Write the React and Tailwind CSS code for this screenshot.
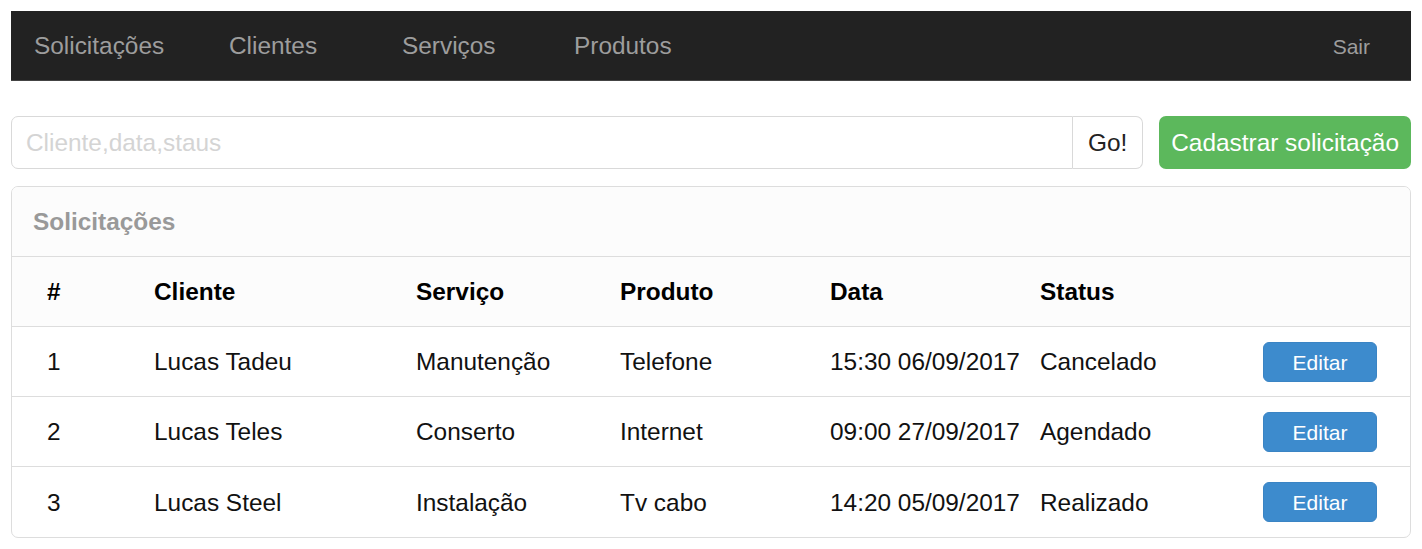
import React from 'react';

const rows = [
  { id: 1, cliente: 'Lucas Tadeu', servico: 'Manutenção', produto: 'Telefone', data: '15:30 06/09/2017', status: 'Cancelado' },
  { id: 2, cliente: 'Lucas Teles', servico: 'Conserto', produto: 'Internet', data: '09:00 27/09/2017', status: 'Agendado' },
  { id: 3, cliente: 'Lucas Steel', servico: 'Instalação', produto: 'Tv cabo', data: '14:20 05/09/2017', status: 'Realizado' },
];

const cols = 'grid grid-cols-[107px_262px_204px_210px_210px_223px_1fr] pl-[35px] items-center';

export default function App() {
  return (
    <div className="bg-white min-h-screen p-[11px] text-[24.4px] text-[#111] font-['Liberation_Sans',Arial,sans-serif]">
      <nav className="flex items-center h-[70px] pt-[2px] bg-[#222] border-b border-[#444] pl-[23px] pr-[41px] text-[#9d9d9d]">
        <a className="w-[195px]">Solicitações</a>
        <a className="w-[173px]">Clientes</a>
        <a className="w-[172px]">Serviços</a>
        <a>Produtos</a>
        <a className="ml-auto text-[21px]">Sair</a>
      </nav>

      <div className="flex mt-[35px] gap-[16px]">
        <div className="flex flex-1 h-[53px]">
          <input
            className="flex-1 min-w-0 border border-[#d9d9d9] rounded-l-[7px] px-[14px] pt-[2px] outline-none placeholder:text-[#d4d4d4]"
            placeholder="Cliente,data,staus"
          />
          <button type="button" className="w-[70px] pt-[2px] border border-l-0 border-[#d9d9d9] rounded-r-[7px] bg-white text-[#222]">
            Go!
          </button>
        </div>
        <button type="button" className="h-[53px] pt-[2px] px-[12px] rounded-[7px] bg-[#5cb85c] text-white">
          Cadastrar solicitação
        </button>
      </div>

      <div className="mt-[17px] border border-[#ddd] rounded-[7px] overflow-hidden">
        <div className="h-[70px] flex items-center pt-[2px] px-[21px] bg-[#fcfcfc] border-b border-[#ddd] font-bold text-[#999]">
          Solicitações
        </div>
        <div className={`${cols} h-[70px] pt-[2px] bg-[#fcfcfc] border-b border-[#ddd] font-bold text-black`}>
          <span>#</span>
          <span>Cliente</span>
          <span>Serviço</span>
          <span>Produto</span>
          <span>Data</span>
          <span>Status</span>
          <span />
        </div>
        {rows.map((r, i) => (
          <div key={r.id} className={`${cols} h-[70px] ${i < rows.length - 1 ? 'border-b border-[#ddd]' : ''}`}>
            <span className="pt-[2px]">{r.id}</span>
            <span className="pt-[2px]">{r.cliente}</span>
            <span className="pt-[2px]">{r.servico}</span>
            <span className="pt-[2px]">{r.produto}</span>
            <span className="pt-[2px]">{r.data}</span>
            <span className="pt-[2px]">{r.status}</span>
            <span>
              <button type="button" className="w-[114px] h-[40px] pt-[2px] rounded-[6px] bg-[#3d8bcd] text-white text-[21px] border border-[#3a84c4]">
                Editar
              </button>
            </span>
          </div>
        ))}
      </div>
    </div>
  );
}
